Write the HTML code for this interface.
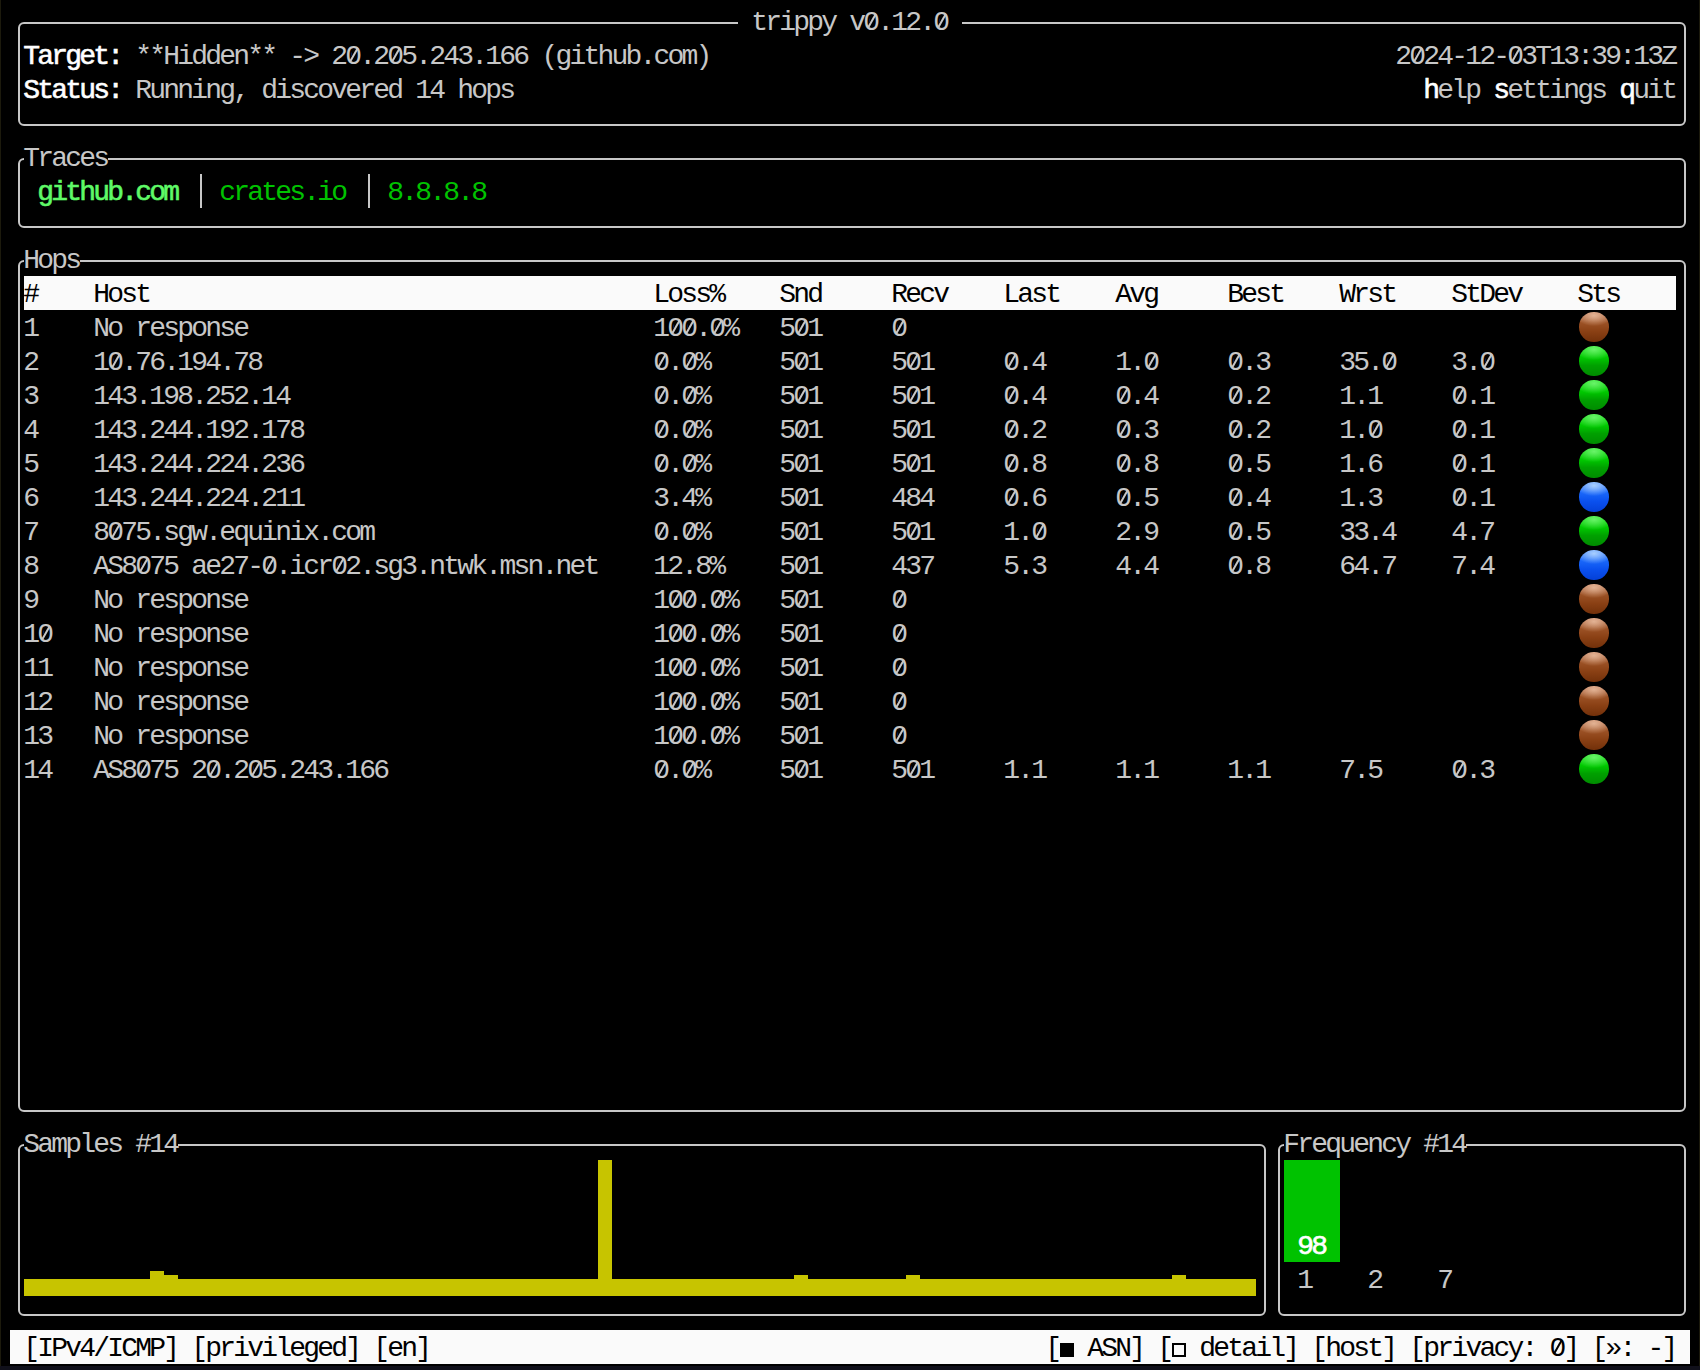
<!DOCTYPE html>
<html><head><meta charset="utf-8"><style>
html,body{margin:0;padding:0;background:#000;}
body{width:1700px;height:1370px;position:relative;overflow:hidden;}
.t{position:absolute;white-space:pre;font-family:"Liberation Mono",monospace;font-size:28px;letter-spacing:-2.8px;line-height:34px;height:34px;}
.r{position:absolute;}
.b{position:absolute;box-sizing:border-box;border:2px solid #c7c7c7;border-radius:6px;}
.ball{position:absolute;width:29.5px;height:29.5px;border-radius:50%;}
.cb{background:radial-gradient(ellipse 60% 35% at 50% 12%, rgba(235,190,160,0.85) 0%, rgba(235,190,160,0) 100%), linear-gradient(#c08060 0%, #9c5226 35%, #8a4014 65%, #72300a 100%);}
.cg{background:radial-gradient(ellipse 60% 35% at 50% 12%, rgba(140,255,140,0.7) 0%, rgba(140,255,140,0) 100%), linear-gradient(#20e020 0%, #00c800 40%, #00a000 65%, #008c00 100%);}
.cu{background:radial-gradient(ellipse 60% 35% at 50% 12%, rgba(180,215,255,0.9) 0%, rgba(180,215,255,0) 100%), linear-gradient(#5090ff 0%, #1a68fa 35%, #0a50ee 65%, #0440d8 100%);}
</style></head><body>
<div class="b" style="left:18px;top:22px;width:1668px;height:104px"></div>
<div class="b" style="left:18px;top:158px;width:1668px;height:70px"></div>
<div class="b" style="left:18px;top:260px;width:1668px;height:852px"></div>
<div class="b" style="left:18px;top:1144px;width:1248px;height:172px"></div>
<div class="b" style="left:1278px;top:1144px;width:408px;height:172px"></div>
<div class="r" style="left:738px;top:19px;width:224px;height:8px;background:#000;"></div>
<div class="t" style="left:737.30px;top:5.50px;color:#c7c7c7"> trippy v0.12.0 </div>
<div class="r" style="left:869.5px;top:17.5px;width:5px;height:5px;background:#000"></div>
<div class="r" style="left:870.65px;top:13.10px;width:1.7px;height:15.5px;background:#c7c7c7;transform:rotate(29.7deg)"></div>
<div class="r" style="left:939.5px;top:17.5px;width:5px;height:5px;background:#000"></div>
<div class="r" style="left:940.65px;top:13.10px;width:1.7px;height:15.5px;background:#c7c7c7;transform:rotate(29.7deg)"></div>
<div class="t" style="left:23.30px;top:39.50px;color:#ffffff;-webkit-text-stroke:0.6px #ffffff">Target:</div>
<div class="t" style="left:135.30px;top:39.50px;color:#c7c7c7">**Hidden** -&gt; 20.205.243.166 (github.com)</div>
<div class="r" style="left:351.5px;top:51.5px;width:5px;height:5px;background:#000"></div>
<div class="r" style="left:352.65px;top:47.10px;width:1.7px;height:15.5px;background:#c7c7c7;transform:rotate(29.7deg)"></div>
<div class="r" style="left:393.5px;top:51.5px;width:5px;height:5px;background:#000"></div>
<div class="r" style="left:394.65px;top:47.10px;width:1.7px;height:15.5px;background:#c7c7c7;transform:rotate(29.7deg)"></div>
<div class="t" style="left:1395.30px;top:39.50px;color:#c7c7c7">2024-12-03T13:39:13Z</div>
<div class="r" style="left:1415.5px;top:51.5px;width:5px;height:5px;background:#000"></div>
<div class="r" style="left:1416.65px;top:47.10px;width:1.7px;height:15.5px;background:#c7c7c7;transform:rotate(29.7deg)"></div>
<div class="r" style="left:1513.5px;top:51.5px;width:5px;height:5px;background:#000"></div>
<div class="r" style="left:1514.65px;top:47.10px;width:1.7px;height:15.5px;background:#c7c7c7;transform:rotate(29.7deg)"></div>
<div class="t" style="left:23.30px;top:73.50px;color:#ffffff;-webkit-text-stroke:0.6px #ffffff">Status:</div>
<div class="t" style="left:135.30px;top:73.50px;color:#c7c7c7">Running, discovered 14 hops</div>
<div class="t" style="left:1423.30px;top:73.50px;color:#ffffff;-webkit-text-stroke:0.6px #ffffff">h</div>
<div class="t" style="left:1437.30px;top:73.50px;color:#c7c7c7">elp</div>
<div class="t" style="left:1493.30px;top:73.50px;color:#ffffff;-webkit-text-stroke:0.6px #ffffff">s</div>
<div class="t" style="left:1507.30px;top:73.50px;color:#c7c7c7">ettings</div>
<div class="t" style="left:1619.30px;top:73.50px;color:#ffffff;-webkit-text-stroke:0.6px #ffffff">q</div>
<div class="t" style="left:1633.30px;top:73.50px;color:#c7c7c7">uit</div>
<div class="r" style="left:24px;top:155px;width:84px;height:8px;background:#000;"></div>
<div class="t" style="left:23.30px;top:141.50px;color:#c7c7c7">Traces</div>
<div class="t" style="left:37.30px;top:175.50px;color:#5ff967;-webkit-text-stroke:0.6px #5ff967">github.com</div>
<div class="r" style="left:200px;top:174px;width:2px;height:34px;background:#c7c7c7;"></div>
<div class="t" style="left:219.30px;top:175.50px;color:#00c200">crates.io</div>
<div class="r" style="left:368px;top:174px;width:2px;height:34px;background:#c7c7c7;"></div>
<div class="t" style="left:387.30px;top:175.50px;color:#00c200">8.8.8.8</div>
<div class="r" style="left:24px;top:257px;width:56px;height:8px;background:#000;"></div>
<div class="t" style="left:23.30px;top:243.50px;color:#c7c7c7">Hops</div>
<div class="r" style="left:24px;top:276px;width:1652px;height:34px;background:#fafafa;"></div>
<div class="t" style="left:23.30px;top:277.50px;color:#000">#</div>
<div class="t" style="left:93.30px;top:277.50px;color:#000">Host</div>
<div class="t" style="left:653.30px;top:277.50px;color:#000">Loss%</div>
<div class="t" style="left:779.30px;top:277.50px;color:#000">Snd</div>
<div class="t" style="left:891.30px;top:277.50px;color:#000">Recv</div>
<div class="t" style="left:1003.30px;top:277.50px;color:#000">Last</div>
<div class="t" style="left:1115.30px;top:277.50px;color:#000">Avg</div>
<div class="t" style="left:1227.30px;top:277.50px;color:#000">Best</div>
<div class="t" style="left:1339.30px;top:277.50px;color:#000">Wrst</div>
<div class="t" style="left:1451.30px;top:277.50px;color:#000">StDev</div>
<div class="t" style="left:1577.30px;top:277.50px;color:#000">Sts</div>
<div class="t" style="left:23.30px;top:311.50px;color:#c7c7c7">1</div>
<div class="t" style="left:93.30px;top:311.50px;color:#c7c7c7">No response</div>
<div class="t" style="left:653.30px;top:311.50px;color:#c7c7c7">100.0%</div>
<div class="r" style="left:673.5px;top:323.5px;width:5px;height:5px;background:#000"></div>
<div class="r" style="left:674.65px;top:319.10px;width:1.7px;height:15.5px;background:#c7c7c7;transform:rotate(29.7deg)"></div>
<div class="r" style="left:687.5px;top:323.5px;width:5px;height:5px;background:#000"></div>
<div class="r" style="left:688.65px;top:319.10px;width:1.7px;height:15.5px;background:#c7c7c7;transform:rotate(29.7deg)"></div>
<div class="r" style="left:715.5px;top:323.5px;width:5px;height:5px;background:#000"></div>
<div class="r" style="left:716.65px;top:319.10px;width:1.7px;height:15.5px;background:#c7c7c7;transform:rotate(29.7deg)"></div>
<div class="t" style="left:779.30px;top:311.50px;color:#c7c7c7">501</div>
<div class="r" style="left:799.5px;top:323.5px;width:5px;height:5px;background:#000"></div>
<div class="r" style="left:800.65px;top:319.10px;width:1.7px;height:15.5px;background:#c7c7c7;transform:rotate(29.7deg)"></div>
<div class="t" style="left:891.30px;top:311.50px;color:#c7c7c7">0</div>
<div class="r" style="left:897.5px;top:323.5px;width:5px;height:5px;background:#000"></div>
<div class="r" style="left:898.65px;top:319.10px;width:1.7px;height:15.5px;background:#c7c7c7;transform:rotate(29.7deg)"></div>
<div class="ball cb" style="left:1579.25px;top:312.25px"></div>
<div class="t" style="left:23.30px;top:345.50px;color:#c7c7c7">2</div>
<div class="t" style="left:93.30px;top:345.50px;color:#c7c7c7">10.76.194.78</div>
<div class="r" style="left:113.5px;top:357.5px;width:5px;height:5px;background:#000"></div>
<div class="r" style="left:114.65px;top:353.10px;width:1.7px;height:15.5px;background:#c7c7c7;transform:rotate(29.7deg)"></div>
<div class="t" style="left:653.30px;top:345.50px;color:#c7c7c7">0.0%</div>
<div class="r" style="left:659.5px;top:357.5px;width:5px;height:5px;background:#000"></div>
<div class="r" style="left:660.65px;top:353.10px;width:1.7px;height:15.5px;background:#c7c7c7;transform:rotate(29.7deg)"></div>
<div class="r" style="left:687.5px;top:357.5px;width:5px;height:5px;background:#000"></div>
<div class="r" style="left:688.65px;top:353.10px;width:1.7px;height:15.5px;background:#c7c7c7;transform:rotate(29.7deg)"></div>
<div class="t" style="left:779.30px;top:345.50px;color:#c7c7c7">501</div>
<div class="r" style="left:799.5px;top:357.5px;width:5px;height:5px;background:#000"></div>
<div class="r" style="left:800.65px;top:353.10px;width:1.7px;height:15.5px;background:#c7c7c7;transform:rotate(29.7deg)"></div>
<div class="t" style="left:891.30px;top:345.50px;color:#c7c7c7">501</div>
<div class="r" style="left:911.5px;top:357.5px;width:5px;height:5px;background:#000"></div>
<div class="r" style="left:912.65px;top:353.10px;width:1.7px;height:15.5px;background:#c7c7c7;transform:rotate(29.7deg)"></div>
<div class="t" style="left:1003.30px;top:345.50px;color:#c7c7c7">0.4</div>
<div class="r" style="left:1009.5px;top:357.5px;width:5px;height:5px;background:#000"></div>
<div class="r" style="left:1010.65px;top:353.10px;width:1.7px;height:15.5px;background:#c7c7c7;transform:rotate(29.7deg)"></div>
<div class="t" style="left:1115.30px;top:345.50px;color:#c7c7c7">1.0</div>
<div class="r" style="left:1149.5px;top:357.5px;width:5px;height:5px;background:#000"></div>
<div class="r" style="left:1150.65px;top:353.10px;width:1.7px;height:15.5px;background:#c7c7c7;transform:rotate(29.7deg)"></div>
<div class="t" style="left:1227.30px;top:345.50px;color:#c7c7c7">0.3</div>
<div class="r" style="left:1233.5px;top:357.5px;width:5px;height:5px;background:#000"></div>
<div class="r" style="left:1234.65px;top:353.10px;width:1.7px;height:15.5px;background:#c7c7c7;transform:rotate(29.7deg)"></div>
<div class="t" style="left:1339.30px;top:345.50px;color:#c7c7c7">35.0</div>
<div class="r" style="left:1387.5px;top:357.5px;width:5px;height:5px;background:#000"></div>
<div class="r" style="left:1388.65px;top:353.10px;width:1.7px;height:15.5px;background:#c7c7c7;transform:rotate(29.7deg)"></div>
<div class="t" style="left:1451.30px;top:345.50px;color:#c7c7c7">3.0</div>
<div class="r" style="left:1485.5px;top:357.5px;width:5px;height:5px;background:#000"></div>
<div class="r" style="left:1486.65px;top:353.10px;width:1.7px;height:15.5px;background:#c7c7c7;transform:rotate(29.7deg)"></div>
<div class="ball cg" style="left:1579.25px;top:346.25px"></div>
<div class="t" style="left:23.30px;top:379.50px;color:#c7c7c7">3</div>
<div class="t" style="left:93.30px;top:379.50px;color:#c7c7c7">143.198.252.14</div>
<div class="t" style="left:653.30px;top:379.50px;color:#c7c7c7">0.0%</div>
<div class="r" style="left:659.5px;top:391.5px;width:5px;height:5px;background:#000"></div>
<div class="r" style="left:660.65px;top:387.10px;width:1.7px;height:15.5px;background:#c7c7c7;transform:rotate(29.7deg)"></div>
<div class="r" style="left:687.5px;top:391.5px;width:5px;height:5px;background:#000"></div>
<div class="r" style="left:688.65px;top:387.10px;width:1.7px;height:15.5px;background:#c7c7c7;transform:rotate(29.7deg)"></div>
<div class="t" style="left:779.30px;top:379.50px;color:#c7c7c7">501</div>
<div class="r" style="left:799.5px;top:391.5px;width:5px;height:5px;background:#000"></div>
<div class="r" style="left:800.65px;top:387.10px;width:1.7px;height:15.5px;background:#c7c7c7;transform:rotate(29.7deg)"></div>
<div class="t" style="left:891.30px;top:379.50px;color:#c7c7c7">501</div>
<div class="r" style="left:911.5px;top:391.5px;width:5px;height:5px;background:#000"></div>
<div class="r" style="left:912.65px;top:387.10px;width:1.7px;height:15.5px;background:#c7c7c7;transform:rotate(29.7deg)"></div>
<div class="t" style="left:1003.30px;top:379.50px;color:#c7c7c7">0.4</div>
<div class="r" style="left:1009.5px;top:391.5px;width:5px;height:5px;background:#000"></div>
<div class="r" style="left:1010.65px;top:387.10px;width:1.7px;height:15.5px;background:#c7c7c7;transform:rotate(29.7deg)"></div>
<div class="t" style="left:1115.30px;top:379.50px;color:#c7c7c7">0.4</div>
<div class="r" style="left:1121.5px;top:391.5px;width:5px;height:5px;background:#000"></div>
<div class="r" style="left:1122.65px;top:387.10px;width:1.7px;height:15.5px;background:#c7c7c7;transform:rotate(29.7deg)"></div>
<div class="t" style="left:1227.30px;top:379.50px;color:#c7c7c7">0.2</div>
<div class="r" style="left:1233.5px;top:391.5px;width:5px;height:5px;background:#000"></div>
<div class="r" style="left:1234.65px;top:387.10px;width:1.7px;height:15.5px;background:#c7c7c7;transform:rotate(29.7deg)"></div>
<div class="t" style="left:1339.30px;top:379.50px;color:#c7c7c7">1.1</div>
<div class="t" style="left:1451.30px;top:379.50px;color:#c7c7c7">0.1</div>
<div class="r" style="left:1457.5px;top:391.5px;width:5px;height:5px;background:#000"></div>
<div class="r" style="left:1458.65px;top:387.10px;width:1.7px;height:15.5px;background:#c7c7c7;transform:rotate(29.7deg)"></div>
<div class="ball cg" style="left:1579.25px;top:380.25px"></div>
<div class="t" style="left:23.30px;top:413.50px;color:#c7c7c7">4</div>
<div class="t" style="left:93.30px;top:413.50px;color:#c7c7c7">143.244.192.178</div>
<div class="t" style="left:653.30px;top:413.50px;color:#c7c7c7">0.0%</div>
<div class="r" style="left:659.5px;top:425.5px;width:5px;height:5px;background:#000"></div>
<div class="r" style="left:660.65px;top:421.10px;width:1.7px;height:15.5px;background:#c7c7c7;transform:rotate(29.7deg)"></div>
<div class="r" style="left:687.5px;top:425.5px;width:5px;height:5px;background:#000"></div>
<div class="r" style="left:688.65px;top:421.10px;width:1.7px;height:15.5px;background:#c7c7c7;transform:rotate(29.7deg)"></div>
<div class="t" style="left:779.30px;top:413.50px;color:#c7c7c7">501</div>
<div class="r" style="left:799.5px;top:425.5px;width:5px;height:5px;background:#000"></div>
<div class="r" style="left:800.65px;top:421.10px;width:1.7px;height:15.5px;background:#c7c7c7;transform:rotate(29.7deg)"></div>
<div class="t" style="left:891.30px;top:413.50px;color:#c7c7c7">501</div>
<div class="r" style="left:911.5px;top:425.5px;width:5px;height:5px;background:#000"></div>
<div class="r" style="left:912.65px;top:421.10px;width:1.7px;height:15.5px;background:#c7c7c7;transform:rotate(29.7deg)"></div>
<div class="t" style="left:1003.30px;top:413.50px;color:#c7c7c7">0.2</div>
<div class="r" style="left:1009.5px;top:425.5px;width:5px;height:5px;background:#000"></div>
<div class="r" style="left:1010.65px;top:421.10px;width:1.7px;height:15.5px;background:#c7c7c7;transform:rotate(29.7deg)"></div>
<div class="t" style="left:1115.30px;top:413.50px;color:#c7c7c7">0.3</div>
<div class="r" style="left:1121.5px;top:425.5px;width:5px;height:5px;background:#000"></div>
<div class="r" style="left:1122.65px;top:421.10px;width:1.7px;height:15.5px;background:#c7c7c7;transform:rotate(29.7deg)"></div>
<div class="t" style="left:1227.30px;top:413.50px;color:#c7c7c7">0.2</div>
<div class="r" style="left:1233.5px;top:425.5px;width:5px;height:5px;background:#000"></div>
<div class="r" style="left:1234.65px;top:421.10px;width:1.7px;height:15.5px;background:#c7c7c7;transform:rotate(29.7deg)"></div>
<div class="t" style="left:1339.30px;top:413.50px;color:#c7c7c7">1.0</div>
<div class="r" style="left:1373.5px;top:425.5px;width:5px;height:5px;background:#000"></div>
<div class="r" style="left:1374.65px;top:421.10px;width:1.7px;height:15.5px;background:#c7c7c7;transform:rotate(29.7deg)"></div>
<div class="t" style="left:1451.30px;top:413.50px;color:#c7c7c7">0.1</div>
<div class="r" style="left:1457.5px;top:425.5px;width:5px;height:5px;background:#000"></div>
<div class="r" style="left:1458.65px;top:421.10px;width:1.7px;height:15.5px;background:#c7c7c7;transform:rotate(29.7deg)"></div>
<div class="ball cg" style="left:1579.25px;top:414.25px"></div>
<div class="t" style="left:23.30px;top:447.50px;color:#c7c7c7">5</div>
<div class="t" style="left:93.30px;top:447.50px;color:#c7c7c7">143.244.224.236</div>
<div class="t" style="left:653.30px;top:447.50px;color:#c7c7c7">0.0%</div>
<div class="r" style="left:659.5px;top:459.5px;width:5px;height:5px;background:#000"></div>
<div class="r" style="left:660.65px;top:455.10px;width:1.7px;height:15.5px;background:#c7c7c7;transform:rotate(29.7deg)"></div>
<div class="r" style="left:687.5px;top:459.5px;width:5px;height:5px;background:#000"></div>
<div class="r" style="left:688.65px;top:455.10px;width:1.7px;height:15.5px;background:#c7c7c7;transform:rotate(29.7deg)"></div>
<div class="t" style="left:779.30px;top:447.50px;color:#c7c7c7">501</div>
<div class="r" style="left:799.5px;top:459.5px;width:5px;height:5px;background:#000"></div>
<div class="r" style="left:800.65px;top:455.10px;width:1.7px;height:15.5px;background:#c7c7c7;transform:rotate(29.7deg)"></div>
<div class="t" style="left:891.30px;top:447.50px;color:#c7c7c7">501</div>
<div class="r" style="left:911.5px;top:459.5px;width:5px;height:5px;background:#000"></div>
<div class="r" style="left:912.65px;top:455.10px;width:1.7px;height:15.5px;background:#c7c7c7;transform:rotate(29.7deg)"></div>
<div class="t" style="left:1003.30px;top:447.50px;color:#c7c7c7">0.8</div>
<div class="r" style="left:1009.5px;top:459.5px;width:5px;height:5px;background:#000"></div>
<div class="r" style="left:1010.65px;top:455.10px;width:1.7px;height:15.5px;background:#c7c7c7;transform:rotate(29.7deg)"></div>
<div class="t" style="left:1115.30px;top:447.50px;color:#c7c7c7">0.8</div>
<div class="r" style="left:1121.5px;top:459.5px;width:5px;height:5px;background:#000"></div>
<div class="r" style="left:1122.65px;top:455.10px;width:1.7px;height:15.5px;background:#c7c7c7;transform:rotate(29.7deg)"></div>
<div class="t" style="left:1227.30px;top:447.50px;color:#c7c7c7">0.5</div>
<div class="r" style="left:1233.5px;top:459.5px;width:5px;height:5px;background:#000"></div>
<div class="r" style="left:1234.65px;top:455.10px;width:1.7px;height:15.5px;background:#c7c7c7;transform:rotate(29.7deg)"></div>
<div class="t" style="left:1339.30px;top:447.50px;color:#c7c7c7">1.6</div>
<div class="t" style="left:1451.30px;top:447.50px;color:#c7c7c7">0.1</div>
<div class="r" style="left:1457.5px;top:459.5px;width:5px;height:5px;background:#000"></div>
<div class="r" style="left:1458.65px;top:455.10px;width:1.7px;height:15.5px;background:#c7c7c7;transform:rotate(29.7deg)"></div>
<div class="ball cg" style="left:1579.25px;top:448.25px"></div>
<div class="t" style="left:23.30px;top:481.50px;color:#c7c7c7">6</div>
<div class="t" style="left:93.30px;top:481.50px;color:#c7c7c7">143.244.224.211</div>
<div class="t" style="left:653.30px;top:481.50px;color:#c7c7c7">3.4%</div>
<div class="t" style="left:779.30px;top:481.50px;color:#c7c7c7">501</div>
<div class="r" style="left:799.5px;top:493.5px;width:5px;height:5px;background:#000"></div>
<div class="r" style="left:800.65px;top:489.10px;width:1.7px;height:15.5px;background:#c7c7c7;transform:rotate(29.7deg)"></div>
<div class="t" style="left:891.30px;top:481.50px;color:#c7c7c7">484</div>
<div class="t" style="left:1003.30px;top:481.50px;color:#c7c7c7">0.6</div>
<div class="r" style="left:1009.5px;top:493.5px;width:5px;height:5px;background:#000"></div>
<div class="r" style="left:1010.65px;top:489.10px;width:1.7px;height:15.5px;background:#c7c7c7;transform:rotate(29.7deg)"></div>
<div class="t" style="left:1115.30px;top:481.50px;color:#c7c7c7">0.5</div>
<div class="r" style="left:1121.5px;top:493.5px;width:5px;height:5px;background:#000"></div>
<div class="r" style="left:1122.65px;top:489.10px;width:1.7px;height:15.5px;background:#c7c7c7;transform:rotate(29.7deg)"></div>
<div class="t" style="left:1227.30px;top:481.50px;color:#c7c7c7">0.4</div>
<div class="r" style="left:1233.5px;top:493.5px;width:5px;height:5px;background:#000"></div>
<div class="r" style="left:1234.65px;top:489.10px;width:1.7px;height:15.5px;background:#c7c7c7;transform:rotate(29.7deg)"></div>
<div class="t" style="left:1339.30px;top:481.50px;color:#c7c7c7">1.3</div>
<div class="t" style="left:1451.30px;top:481.50px;color:#c7c7c7">0.1</div>
<div class="r" style="left:1457.5px;top:493.5px;width:5px;height:5px;background:#000"></div>
<div class="r" style="left:1458.65px;top:489.10px;width:1.7px;height:15.5px;background:#c7c7c7;transform:rotate(29.7deg)"></div>
<div class="ball cu" style="left:1579.25px;top:482.25px"></div>
<div class="t" style="left:23.30px;top:515.50px;color:#c7c7c7">7</div>
<div class="t" style="left:93.30px;top:515.50px;color:#c7c7c7">8075.sgw.equinix.com</div>
<div class="r" style="left:113.5px;top:527.5px;width:5px;height:5px;background:#000"></div>
<div class="r" style="left:114.65px;top:523.10px;width:1.7px;height:15.5px;background:#c7c7c7;transform:rotate(29.7deg)"></div>
<div class="t" style="left:653.30px;top:515.50px;color:#c7c7c7">0.0%</div>
<div class="r" style="left:659.5px;top:527.5px;width:5px;height:5px;background:#000"></div>
<div class="r" style="left:660.65px;top:523.10px;width:1.7px;height:15.5px;background:#c7c7c7;transform:rotate(29.7deg)"></div>
<div class="r" style="left:687.5px;top:527.5px;width:5px;height:5px;background:#000"></div>
<div class="r" style="left:688.65px;top:523.10px;width:1.7px;height:15.5px;background:#c7c7c7;transform:rotate(29.7deg)"></div>
<div class="t" style="left:779.30px;top:515.50px;color:#c7c7c7">501</div>
<div class="r" style="left:799.5px;top:527.5px;width:5px;height:5px;background:#000"></div>
<div class="r" style="left:800.65px;top:523.10px;width:1.7px;height:15.5px;background:#c7c7c7;transform:rotate(29.7deg)"></div>
<div class="t" style="left:891.30px;top:515.50px;color:#c7c7c7">501</div>
<div class="r" style="left:911.5px;top:527.5px;width:5px;height:5px;background:#000"></div>
<div class="r" style="left:912.65px;top:523.10px;width:1.7px;height:15.5px;background:#c7c7c7;transform:rotate(29.7deg)"></div>
<div class="t" style="left:1003.30px;top:515.50px;color:#c7c7c7">1.0</div>
<div class="r" style="left:1037.5px;top:527.5px;width:5px;height:5px;background:#000"></div>
<div class="r" style="left:1038.65px;top:523.10px;width:1.7px;height:15.5px;background:#c7c7c7;transform:rotate(29.7deg)"></div>
<div class="t" style="left:1115.30px;top:515.50px;color:#c7c7c7">2.9</div>
<div class="t" style="left:1227.30px;top:515.50px;color:#c7c7c7">0.5</div>
<div class="r" style="left:1233.5px;top:527.5px;width:5px;height:5px;background:#000"></div>
<div class="r" style="left:1234.65px;top:523.10px;width:1.7px;height:15.5px;background:#c7c7c7;transform:rotate(29.7deg)"></div>
<div class="t" style="left:1339.30px;top:515.50px;color:#c7c7c7">33.4</div>
<div class="t" style="left:1451.30px;top:515.50px;color:#c7c7c7">4.7</div>
<div class="ball cg" style="left:1579.25px;top:516.25px"></div>
<div class="t" style="left:23.30px;top:549.50px;color:#c7c7c7">8</div>
<div class="t" style="left:93.30px;top:549.50px;color:#c7c7c7">AS8075 ae27-0.icr02.sg3.ntwk.msn.net</div>
<div class="r" style="left:141.5px;top:561.5px;width:5px;height:5px;background:#000"></div>
<div class="r" style="left:142.65px;top:557.10px;width:1.7px;height:15.5px;background:#c7c7c7;transform:rotate(29.7deg)"></div>
<div class="r" style="left:267.5px;top:561.5px;width:5px;height:5px;background:#000"></div>
<div class="r" style="left:268.65px;top:557.10px;width:1.7px;height:15.5px;background:#c7c7c7;transform:rotate(29.7deg)"></div>
<div class="r" style="left:337.5px;top:561.5px;width:5px;height:5px;background:#000"></div>
<div class="r" style="left:338.65px;top:557.10px;width:1.7px;height:15.5px;background:#c7c7c7;transform:rotate(29.7deg)"></div>
<div class="t" style="left:653.30px;top:549.50px;color:#c7c7c7">12.8%</div>
<div class="t" style="left:779.30px;top:549.50px;color:#c7c7c7">501</div>
<div class="r" style="left:799.5px;top:561.5px;width:5px;height:5px;background:#000"></div>
<div class="r" style="left:800.65px;top:557.10px;width:1.7px;height:15.5px;background:#c7c7c7;transform:rotate(29.7deg)"></div>
<div class="t" style="left:891.30px;top:549.50px;color:#c7c7c7">437</div>
<div class="t" style="left:1003.30px;top:549.50px;color:#c7c7c7">5.3</div>
<div class="t" style="left:1115.30px;top:549.50px;color:#c7c7c7">4.4</div>
<div class="t" style="left:1227.30px;top:549.50px;color:#c7c7c7">0.8</div>
<div class="r" style="left:1233.5px;top:561.5px;width:5px;height:5px;background:#000"></div>
<div class="r" style="left:1234.65px;top:557.10px;width:1.7px;height:15.5px;background:#c7c7c7;transform:rotate(29.7deg)"></div>
<div class="t" style="left:1339.30px;top:549.50px;color:#c7c7c7">64.7</div>
<div class="t" style="left:1451.30px;top:549.50px;color:#c7c7c7">7.4</div>
<div class="ball cu" style="left:1579.25px;top:550.25px"></div>
<div class="t" style="left:23.30px;top:583.50px;color:#c7c7c7">9</div>
<div class="t" style="left:93.30px;top:583.50px;color:#c7c7c7">No response</div>
<div class="t" style="left:653.30px;top:583.50px;color:#c7c7c7">100.0%</div>
<div class="r" style="left:673.5px;top:595.5px;width:5px;height:5px;background:#000"></div>
<div class="r" style="left:674.65px;top:591.10px;width:1.7px;height:15.5px;background:#c7c7c7;transform:rotate(29.7deg)"></div>
<div class="r" style="left:687.5px;top:595.5px;width:5px;height:5px;background:#000"></div>
<div class="r" style="left:688.65px;top:591.10px;width:1.7px;height:15.5px;background:#c7c7c7;transform:rotate(29.7deg)"></div>
<div class="r" style="left:715.5px;top:595.5px;width:5px;height:5px;background:#000"></div>
<div class="r" style="left:716.65px;top:591.10px;width:1.7px;height:15.5px;background:#c7c7c7;transform:rotate(29.7deg)"></div>
<div class="t" style="left:779.30px;top:583.50px;color:#c7c7c7">501</div>
<div class="r" style="left:799.5px;top:595.5px;width:5px;height:5px;background:#000"></div>
<div class="r" style="left:800.65px;top:591.10px;width:1.7px;height:15.5px;background:#c7c7c7;transform:rotate(29.7deg)"></div>
<div class="t" style="left:891.30px;top:583.50px;color:#c7c7c7">0</div>
<div class="r" style="left:897.5px;top:595.5px;width:5px;height:5px;background:#000"></div>
<div class="r" style="left:898.65px;top:591.10px;width:1.7px;height:15.5px;background:#c7c7c7;transform:rotate(29.7deg)"></div>
<div class="ball cb" style="left:1579.25px;top:584.25px"></div>
<div class="t" style="left:23.30px;top:617.50px;color:#c7c7c7">10</div>
<div class="r" style="left:43.5px;top:629.5px;width:5px;height:5px;background:#000"></div>
<div class="r" style="left:44.65px;top:625.10px;width:1.7px;height:15.5px;background:#c7c7c7;transform:rotate(29.7deg)"></div>
<div class="t" style="left:93.30px;top:617.50px;color:#c7c7c7">No response</div>
<div class="t" style="left:653.30px;top:617.50px;color:#c7c7c7">100.0%</div>
<div class="r" style="left:673.5px;top:629.5px;width:5px;height:5px;background:#000"></div>
<div class="r" style="left:674.65px;top:625.10px;width:1.7px;height:15.5px;background:#c7c7c7;transform:rotate(29.7deg)"></div>
<div class="r" style="left:687.5px;top:629.5px;width:5px;height:5px;background:#000"></div>
<div class="r" style="left:688.65px;top:625.10px;width:1.7px;height:15.5px;background:#c7c7c7;transform:rotate(29.7deg)"></div>
<div class="r" style="left:715.5px;top:629.5px;width:5px;height:5px;background:#000"></div>
<div class="r" style="left:716.65px;top:625.10px;width:1.7px;height:15.5px;background:#c7c7c7;transform:rotate(29.7deg)"></div>
<div class="t" style="left:779.30px;top:617.50px;color:#c7c7c7">501</div>
<div class="r" style="left:799.5px;top:629.5px;width:5px;height:5px;background:#000"></div>
<div class="r" style="left:800.65px;top:625.10px;width:1.7px;height:15.5px;background:#c7c7c7;transform:rotate(29.7deg)"></div>
<div class="t" style="left:891.30px;top:617.50px;color:#c7c7c7">0</div>
<div class="r" style="left:897.5px;top:629.5px;width:5px;height:5px;background:#000"></div>
<div class="r" style="left:898.65px;top:625.10px;width:1.7px;height:15.5px;background:#c7c7c7;transform:rotate(29.7deg)"></div>
<div class="ball cb" style="left:1579.25px;top:618.25px"></div>
<div class="t" style="left:23.30px;top:651.50px;color:#c7c7c7">11</div>
<div class="t" style="left:93.30px;top:651.50px;color:#c7c7c7">No response</div>
<div class="t" style="left:653.30px;top:651.50px;color:#c7c7c7">100.0%</div>
<div class="r" style="left:673.5px;top:663.5px;width:5px;height:5px;background:#000"></div>
<div class="r" style="left:674.65px;top:659.10px;width:1.7px;height:15.5px;background:#c7c7c7;transform:rotate(29.7deg)"></div>
<div class="r" style="left:687.5px;top:663.5px;width:5px;height:5px;background:#000"></div>
<div class="r" style="left:688.65px;top:659.10px;width:1.7px;height:15.5px;background:#c7c7c7;transform:rotate(29.7deg)"></div>
<div class="r" style="left:715.5px;top:663.5px;width:5px;height:5px;background:#000"></div>
<div class="r" style="left:716.65px;top:659.10px;width:1.7px;height:15.5px;background:#c7c7c7;transform:rotate(29.7deg)"></div>
<div class="t" style="left:779.30px;top:651.50px;color:#c7c7c7">501</div>
<div class="r" style="left:799.5px;top:663.5px;width:5px;height:5px;background:#000"></div>
<div class="r" style="left:800.65px;top:659.10px;width:1.7px;height:15.5px;background:#c7c7c7;transform:rotate(29.7deg)"></div>
<div class="t" style="left:891.30px;top:651.50px;color:#c7c7c7">0</div>
<div class="r" style="left:897.5px;top:663.5px;width:5px;height:5px;background:#000"></div>
<div class="r" style="left:898.65px;top:659.10px;width:1.7px;height:15.5px;background:#c7c7c7;transform:rotate(29.7deg)"></div>
<div class="ball cb" style="left:1579.25px;top:652.25px"></div>
<div class="t" style="left:23.30px;top:685.50px;color:#c7c7c7">12</div>
<div class="t" style="left:93.30px;top:685.50px;color:#c7c7c7">No response</div>
<div class="t" style="left:653.30px;top:685.50px;color:#c7c7c7">100.0%</div>
<div class="r" style="left:673.5px;top:697.5px;width:5px;height:5px;background:#000"></div>
<div class="r" style="left:674.65px;top:693.10px;width:1.7px;height:15.5px;background:#c7c7c7;transform:rotate(29.7deg)"></div>
<div class="r" style="left:687.5px;top:697.5px;width:5px;height:5px;background:#000"></div>
<div class="r" style="left:688.65px;top:693.10px;width:1.7px;height:15.5px;background:#c7c7c7;transform:rotate(29.7deg)"></div>
<div class="r" style="left:715.5px;top:697.5px;width:5px;height:5px;background:#000"></div>
<div class="r" style="left:716.65px;top:693.10px;width:1.7px;height:15.5px;background:#c7c7c7;transform:rotate(29.7deg)"></div>
<div class="t" style="left:779.30px;top:685.50px;color:#c7c7c7">501</div>
<div class="r" style="left:799.5px;top:697.5px;width:5px;height:5px;background:#000"></div>
<div class="r" style="left:800.65px;top:693.10px;width:1.7px;height:15.5px;background:#c7c7c7;transform:rotate(29.7deg)"></div>
<div class="t" style="left:891.30px;top:685.50px;color:#c7c7c7">0</div>
<div class="r" style="left:897.5px;top:697.5px;width:5px;height:5px;background:#000"></div>
<div class="r" style="left:898.65px;top:693.10px;width:1.7px;height:15.5px;background:#c7c7c7;transform:rotate(29.7deg)"></div>
<div class="ball cb" style="left:1579.25px;top:686.25px"></div>
<div class="t" style="left:23.30px;top:719.50px;color:#c7c7c7">13</div>
<div class="t" style="left:93.30px;top:719.50px;color:#c7c7c7">No response</div>
<div class="t" style="left:653.30px;top:719.50px;color:#c7c7c7">100.0%</div>
<div class="r" style="left:673.5px;top:731.5px;width:5px;height:5px;background:#000"></div>
<div class="r" style="left:674.65px;top:727.10px;width:1.7px;height:15.5px;background:#c7c7c7;transform:rotate(29.7deg)"></div>
<div class="r" style="left:687.5px;top:731.5px;width:5px;height:5px;background:#000"></div>
<div class="r" style="left:688.65px;top:727.10px;width:1.7px;height:15.5px;background:#c7c7c7;transform:rotate(29.7deg)"></div>
<div class="r" style="left:715.5px;top:731.5px;width:5px;height:5px;background:#000"></div>
<div class="r" style="left:716.65px;top:727.10px;width:1.7px;height:15.5px;background:#c7c7c7;transform:rotate(29.7deg)"></div>
<div class="t" style="left:779.30px;top:719.50px;color:#c7c7c7">501</div>
<div class="r" style="left:799.5px;top:731.5px;width:5px;height:5px;background:#000"></div>
<div class="r" style="left:800.65px;top:727.10px;width:1.7px;height:15.5px;background:#c7c7c7;transform:rotate(29.7deg)"></div>
<div class="t" style="left:891.30px;top:719.50px;color:#c7c7c7">0</div>
<div class="r" style="left:897.5px;top:731.5px;width:5px;height:5px;background:#000"></div>
<div class="r" style="left:898.65px;top:727.10px;width:1.7px;height:15.5px;background:#c7c7c7;transform:rotate(29.7deg)"></div>
<div class="ball cb" style="left:1579.25px;top:720.25px"></div>
<div class="t" style="left:23.30px;top:753.50px;color:#c7c7c7">14</div>
<div class="t" style="left:93.30px;top:753.50px;color:#c7c7c7">AS8075 20.205.243.166</div>
<div class="r" style="left:141.5px;top:765.5px;width:5px;height:5px;background:#000"></div>
<div class="r" style="left:142.65px;top:761.10px;width:1.7px;height:15.5px;background:#c7c7c7;transform:rotate(29.7deg)"></div>
<div class="r" style="left:211.5px;top:765.5px;width:5px;height:5px;background:#000"></div>
<div class="r" style="left:212.65px;top:761.10px;width:1.7px;height:15.5px;background:#c7c7c7;transform:rotate(29.7deg)"></div>
<div class="r" style="left:253.5px;top:765.5px;width:5px;height:5px;background:#000"></div>
<div class="r" style="left:254.65px;top:761.10px;width:1.7px;height:15.5px;background:#c7c7c7;transform:rotate(29.7deg)"></div>
<div class="t" style="left:653.30px;top:753.50px;color:#c7c7c7">0.0%</div>
<div class="r" style="left:659.5px;top:765.5px;width:5px;height:5px;background:#000"></div>
<div class="r" style="left:660.65px;top:761.10px;width:1.7px;height:15.5px;background:#c7c7c7;transform:rotate(29.7deg)"></div>
<div class="r" style="left:687.5px;top:765.5px;width:5px;height:5px;background:#000"></div>
<div class="r" style="left:688.65px;top:761.10px;width:1.7px;height:15.5px;background:#c7c7c7;transform:rotate(29.7deg)"></div>
<div class="t" style="left:779.30px;top:753.50px;color:#c7c7c7">501</div>
<div class="r" style="left:799.5px;top:765.5px;width:5px;height:5px;background:#000"></div>
<div class="r" style="left:800.65px;top:761.10px;width:1.7px;height:15.5px;background:#c7c7c7;transform:rotate(29.7deg)"></div>
<div class="t" style="left:891.30px;top:753.50px;color:#c7c7c7">501</div>
<div class="r" style="left:911.5px;top:765.5px;width:5px;height:5px;background:#000"></div>
<div class="r" style="left:912.65px;top:761.10px;width:1.7px;height:15.5px;background:#c7c7c7;transform:rotate(29.7deg)"></div>
<div class="t" style="left:1003.30px;top:753.50px;color:#c7c7c7">1.1</div>
<div class="t" style="left:1115.30px;top:753.50px;color:#c7c7c7">1.1</div>
<div class="t" style="left:1227.30px;top:753.50px;color:#c7c7c7">1.1</div>
<div class="t" style="left:1339.30px;top:753.50px;color:#c7c7c7">7.5</div>
<div class="t" style="left:1451.30px;top:753.50px;color:#c7c7c7">0.3</div>
<div class="r" style="left:1457.5px;top:765.5px;width:5px;height:5px;background:#000"></div>
<div class="r" style="left:1458.65px;top:761.10px;width:1.7px;height:15.5px;background:#c7c7c7;transform:rotate(29.7deg)"></div>
<div class="ball cg" style="left:1579.25px;top:754.25px"></div>
<div class="r" style="left:24px;top:1141px;width:154px;height:8px;background:#000;"></div>
<div class="t" style="left:23.30px;top:1127.50px;color:#c7c7c7">Samples #14</div>
<div class="r" style="left:1284px;top:1141px;width:182px;height:8px;background:#000;"></div>
<div class="t" style="left:1283.30px;top:1127.50px;color:#c7c7c7">Frequency #14</div>
<div class="r" style="left:24px;top:1279px;width:1232px;height:17px;background:#c7c400;"></div>
<div class="r" style="left:150px;top:1270.50px;width:14px;height:25.50px;background:#c7c400;"></div>
<div class="r" style="left:164px;top:1274.75px;width:14px;height:21.25px;background:#c7c400;"></div>
<div class="r" style="left:794px;top:1274.75px;width:14px;height:21.25px;background:#c7c400;"></div>
<div class="r" style="left:906px;top:1274.75px;width:14px;height:21.25px;background:#c7c400;"></div>
<div class="r" style="left:1172px;top:1274.75px;width:14px;height:21.25px;background:#c7c400;"></div>
<div class="r" style="left:598px;top:1160px;width:14px;height:136px;background:#c7c400;"></div>
<div class="r" style="left:1284px;top:1160px;width:56px;height:102px;background:#00c200;"></div>
<div class="t" style="left:1297.30px;top:1229.50px;color:#ffffff;-webkit-text-stroke:0.6px #ffffff">98</div>
<div class="t" style="left:1297.30px;top:1263.50px;color:#c7c7c7">1</div>
<div class="t" style="left:1367.30px;top:1263.50px;color:#c7c7c7">2</div>
<div class="t" style="left:1437.30px;top:1263.50px;color:#c7c7c7">7</div>
<div class="r" style="left:10px;top:1330px;width:1680px;height:34px;background:#fafafa;"></div>
<div class="t" style="left:23.30px;top:1331.50px;color:#000">[IPv4/ICMP] [privileged] [en]</div>
<div class="t" style="left:1045.30px;top:1331.50px;color:#000">[  ASN] [  detail] [host] [privacy: 0] [»: -]</div>
<div class="r" style="left:1555.5px;top:1343.5px;width:5px;height:5px;background:#fafafa"></div>
<div class="r" style="left:1556.65px;top:1339.10px;width:1.7px;height:15.5px;background:#000;transform:rotate(29.7deg)"></div>
<div class="r" style="left:1060px;top:1343px;width:14px;height:14px;background:#000;"></div>
<div class="r" style="left:1172px;top:1343px;width:14px;height:14px;box-sizing:border-box;border:2px solid #000"></div>
<div class="r" style="left:0px;top:0px;width:1px;height:1370px;background:#1c1a0c;"></div>
<div class="r" style="left:1699px;top:0px;width:1px;height:1370px;background:#1c1a0c;"></div>
<div class="r" style="left:0px;top:1366px;width:1700px;height:4px;background:#10101a;"></div>
</body></html>
